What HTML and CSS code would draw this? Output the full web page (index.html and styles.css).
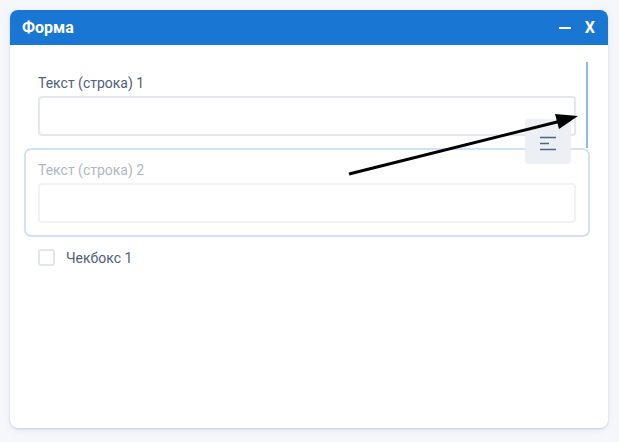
FILE: index.html
```html
<!DOCTYPE html>
<html lang="ru">
<head>
<meta charset="utf-8">
<title>Форма</title>
<link rel="stylesheet" href="styles.css">
</head>
<body>
<div class="window">
  <div class="titlebar">
    <span class="title">Форма</span>
    <div class="controls">
      <span class="ctl-min"></span>
      <span class="ctl-close">X</span>
    </div>
  </div>
  <div class="content">
    <div class="field">
      <label class="label">Текст (строка) 1</label>
      <div class="input"></div>
    </div>
    <div class="field drag">
      <div class="drag-inner">
        <label class="label">Текст (строка) 2</label>
        <div class="input"></div>
      </div>
    </div>
    <div class="check-row">
      <span class="checkbox"></span>
      <span class="check-label">Чекбокс 1</span>
    </div>
  </div>
  <div class="drop-line"></div>
  <div class="handle">
    <svg width="18" height="16" viewBox="0 0 18 16">
      <path d="M1 2.5H17M1 8.5H10M1 14.5H17" stroke="#4d6485" stroke-width="1.6" fill="none"/>
    </svg>
  </div>
  <svg class="arrow" width="598" height="418" viewBox="0 0 598 418">
    <line x1="339" y1="164" x2="555" y2="110" stroke="#000" stroke-width="3"/>
    <polygon points="568,106 545,104 549,119" fill="#000"/>
  </svg>
</div>
</body>
</html>
```
FILE: styles.css
```css
html, body {
  margin: 0;
  padding: 0;
}
body {
  background: #f5f7fb;
  font-family: Roboto, "Liberation Sans", sans-serif;
  width: 619px;
  height: 442px;
  overflow: hidden;
}
.window {
  position: relative;
  margin: 10px 11px 0 10px;
  width: 598px;
  height: 418px;
  background: #fff;
  border-radius: 8px;
  box-shadow: 0 1px 2px rgba(60, 80, 110, 0.2), 0 2px 8px rgba(60, 80, 110, 0.08);
  overflow: hidden;
}
.titlebar {
  height: 35px;
  background: #1976d2;
  display: flex;
  align-items: center;
  justify-content: space-between;
  padding: 0 13px 0 12px;
  color: #fff;
}
.title {
  font-size: 16px;
  font-weight: 700;
}
.controls {
  display: flex;
  align-items: center;
  gap: 14px;
}
.ctl-min {
  display: block;
  width: 12px;
  height: 2px;
  background: #fff;
  margin-top: 1px;
}
.ctl-close {
  font-size: 16px;
  font-weight: 700;
}
.content {
  padding: 28px 32px 0 28px;
  display: flex;
  flex-direction: column;
  gap: 12px;
}
.field {
  display: flex;
  flex-direction: column;
}
.label {
  font-size: 14px;
  line-height: 20px;
  color: #4f6079;
  margin-bottom: 3px;
}
.input {
  height: 36px;
  border: 2px solid #e4e8ed;
  border-radius: 4px;
  background: #fff;
}
.drag {
  margin: 0 -14px;
  padding: 10px 12px 12px;
  border: 2px solid #d2e1f4;
  border-radius: 7px;
}
.drag-inner {
  display: flex;
  flex-direction: column;
  opacity: 0.45;
}
.drag .input {
  border-color: #e0e4ea;
}
.check-row {
  display: flex;
  align-items: center;
  height: 17px;
}
.checkbox {
  width: 13px;
  height: 13px;
  border: 2px solid #e1e6ec;
  border-radius: 3px;
  margin-right: 11px;
}
.check-label {
  font-size: 14px;
  color: #4f6079;
}
.drop-line {
  position: absolute;
  left: 576px;
  top: 52px;
  width: 2px;
  height: 86px;
  background: #94b7e5;
}
.handle {
  position: absolute;
  left: 515px;
  top: 109px;
  width: 46px;
  height: 45px;
  background: #eceff3;
  border-radius: 4px;
  display: flex;
  justify-content: center;
  padding-top: 16px;
  box-sizing: border-box;
}
.handle svg {
  display: block;
}
.arrow {
  position: absolute;
  left: 0;
  top: 0;
  pointer-events: none;
}
```
